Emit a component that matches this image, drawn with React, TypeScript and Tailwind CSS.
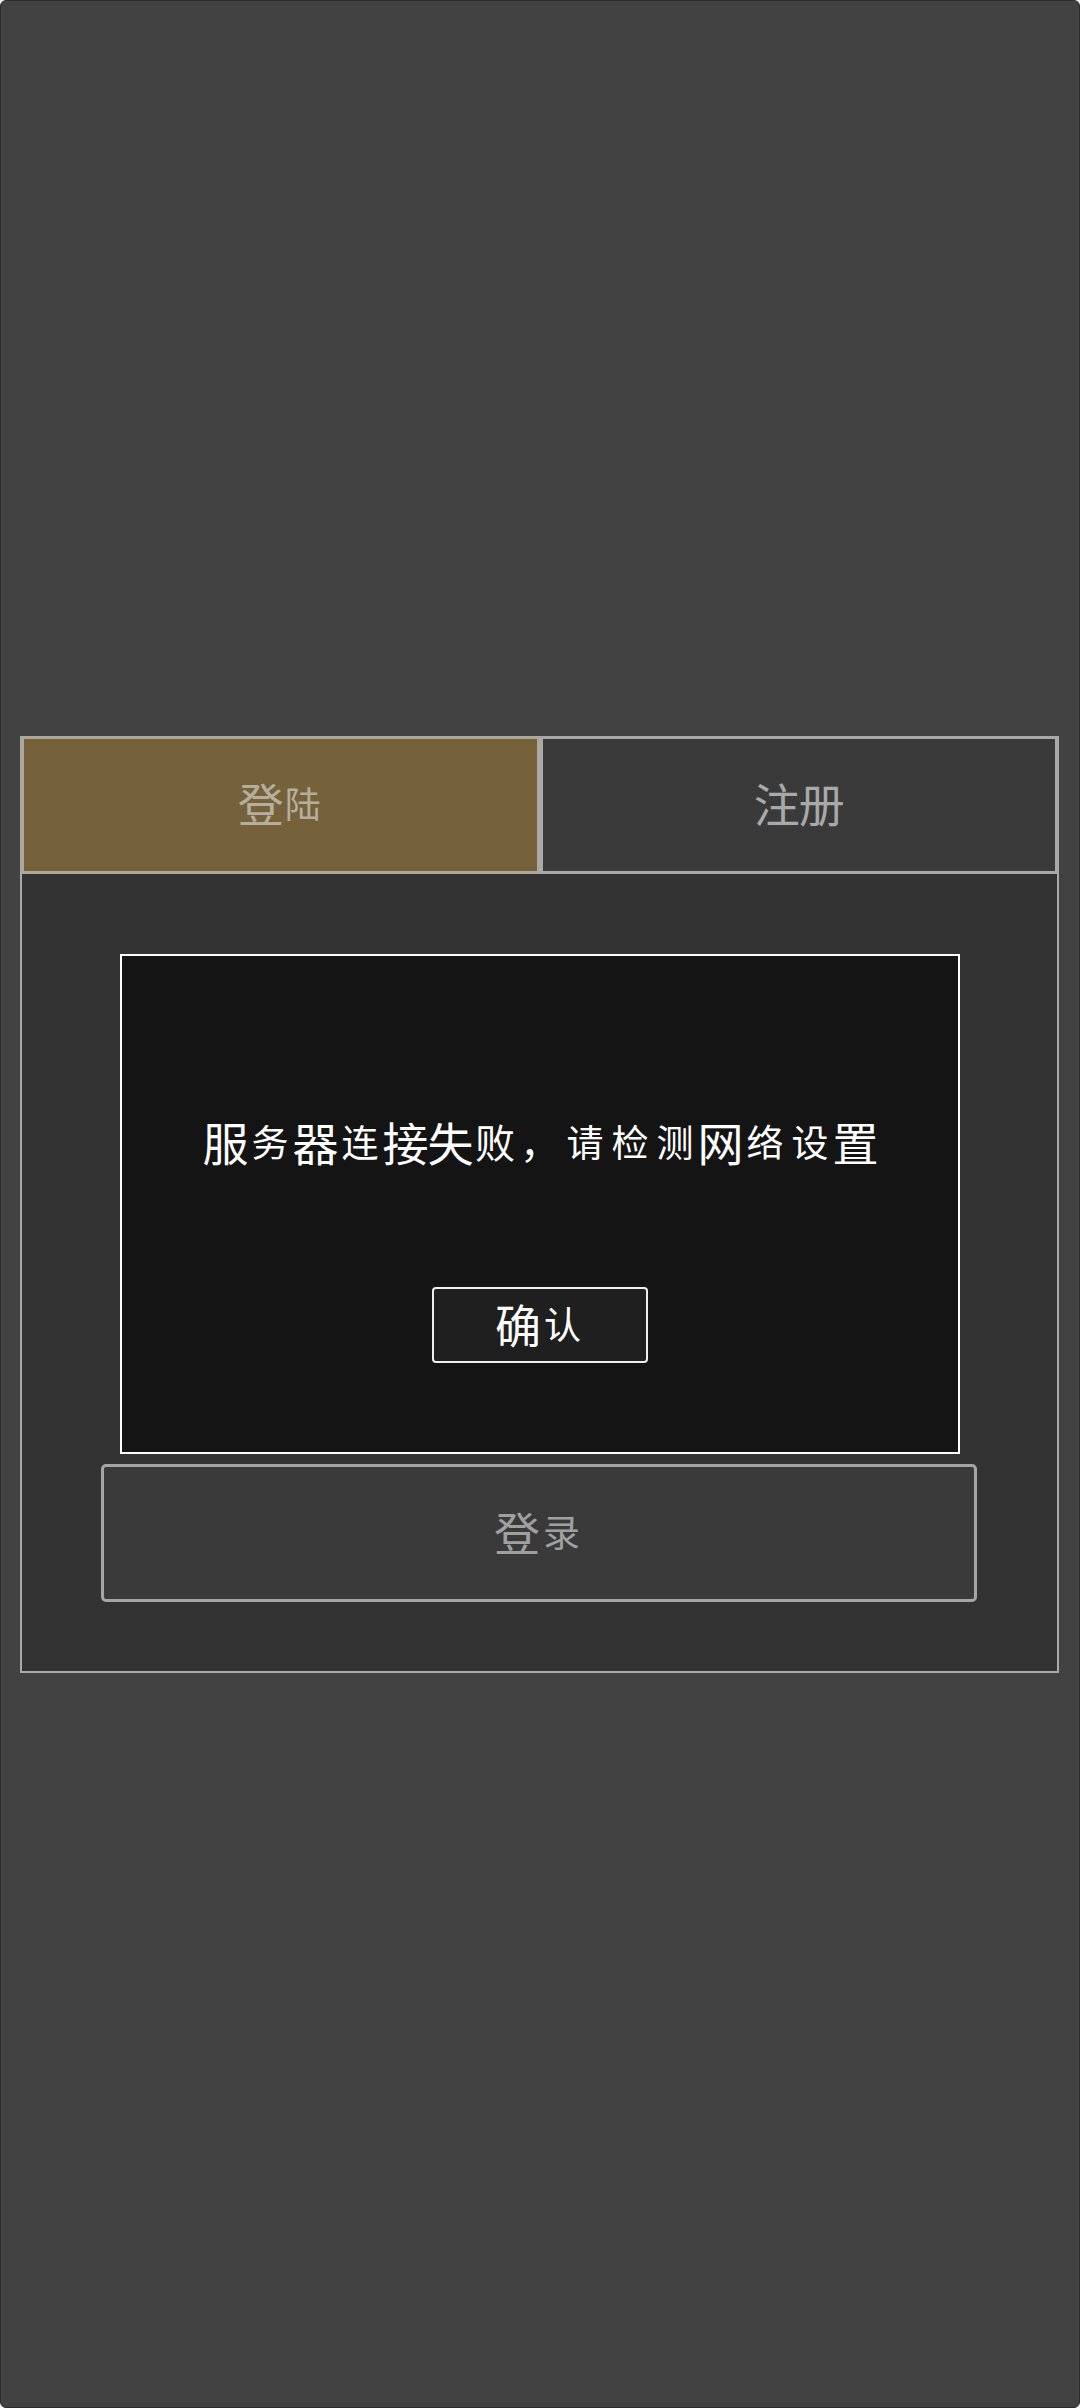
const FONT = "font-['Noto_Sans_CJK_SC','Noto_Sans',sans-serif]";

function Big({ children }: { children: string }) {
  return <span className="inline-block w-[45px] text-center text-[46px] leading-[50px]">{children}</span>;
}
function Mid({ children }: { children: string }) {
  return <span className="inline-block w-[45px] text-center text-[40px] leading-[50px]">{children}</span>;
}
function Small({ children }: { children: string }) {
  return <span className="inline-block w-[45px] text-center text-[37px] leading-[50px]">{children}</span>;
}

export default function App() {
  return (
    <div className={`${FONT} flex h-[2408px] w-[1080px] items-center overflow-hidden rounded-[6px] border border-[#2c2c2c] bg-[#424242] font-normal`}>
      <div className="ml-[19px] flex h-[937px] w-[1039px] flex-col border-2 border-[#a9a9a9] bg-[#333333]">
        <div className="-mx-[1px] -mt-[2px] grid h-[138px] shrink-0 grid-cols-2">
          <div className="flex items-center justify-center border-[3px] border-[#aca89e] bg-[#75623b] pb-[6px] text-[#b5ae9f]">
            <Big>登</Big>
            <span className="inline-block w-[40px] text-center text-[36px] leading-[50px]">陆</span>
          </div>
          <div className="flex items-center justify-center border-[3px] border-[#a9a9a9] bg-[#3a3a3a] pb-[6px] text-[#a9a9a9]">
            <Big>注</Big>
            <Big>册</Big>
          </div>
        </div>

        <div className="relative flex flex-1 flex-col justify-end pb-[69px] pl-[79px] pr-[80px]">
          <button className="flex h-[138px] w-full items-center justify-center rounded-[5px] border-[3px] border-[#a6a6a6] bg-[#3a3a3a] pb-[4px] text-[#a0a0a0]">
            <Big>登</Big>
            <Small>录</Small>
          </button>

          <div className="absolute left-[98px] top-[80px] flex h-[500px] w-[840px] flex-col items-center border-2 border-white bg-[#141414] pt-[160px] text-white">
            <div className="flex items-center whitespace-nowrap">
              <Big>服</Big>
              <Small>务</Small>
              <Big>器</Big>
              <Small>连</Small>
              <Big>接</Big>
              <Big>失</Big>
              <Mid>败</Mid>
              <Mid>，</Mid>
              <Small>请</Small>
              <Small>检</Small>
              <Small>测</Small>
              <Big>网</Big>
              <Small>络</Small>
              <Small>设</Small>
              <Big>置</Big>
            </div>
            <button className="mt-[121px] flex h-[76px] w-[216px] items-center justify-center rounded-[4px] border-2 border-[#eeeeee] bg-[#1f1f1f] pb-[4px] text-white">
              <Big>确</Big>
              <Small>认</Small>
            </button>
          </div>
        </div>
      </div>
    </div>
  );
}
